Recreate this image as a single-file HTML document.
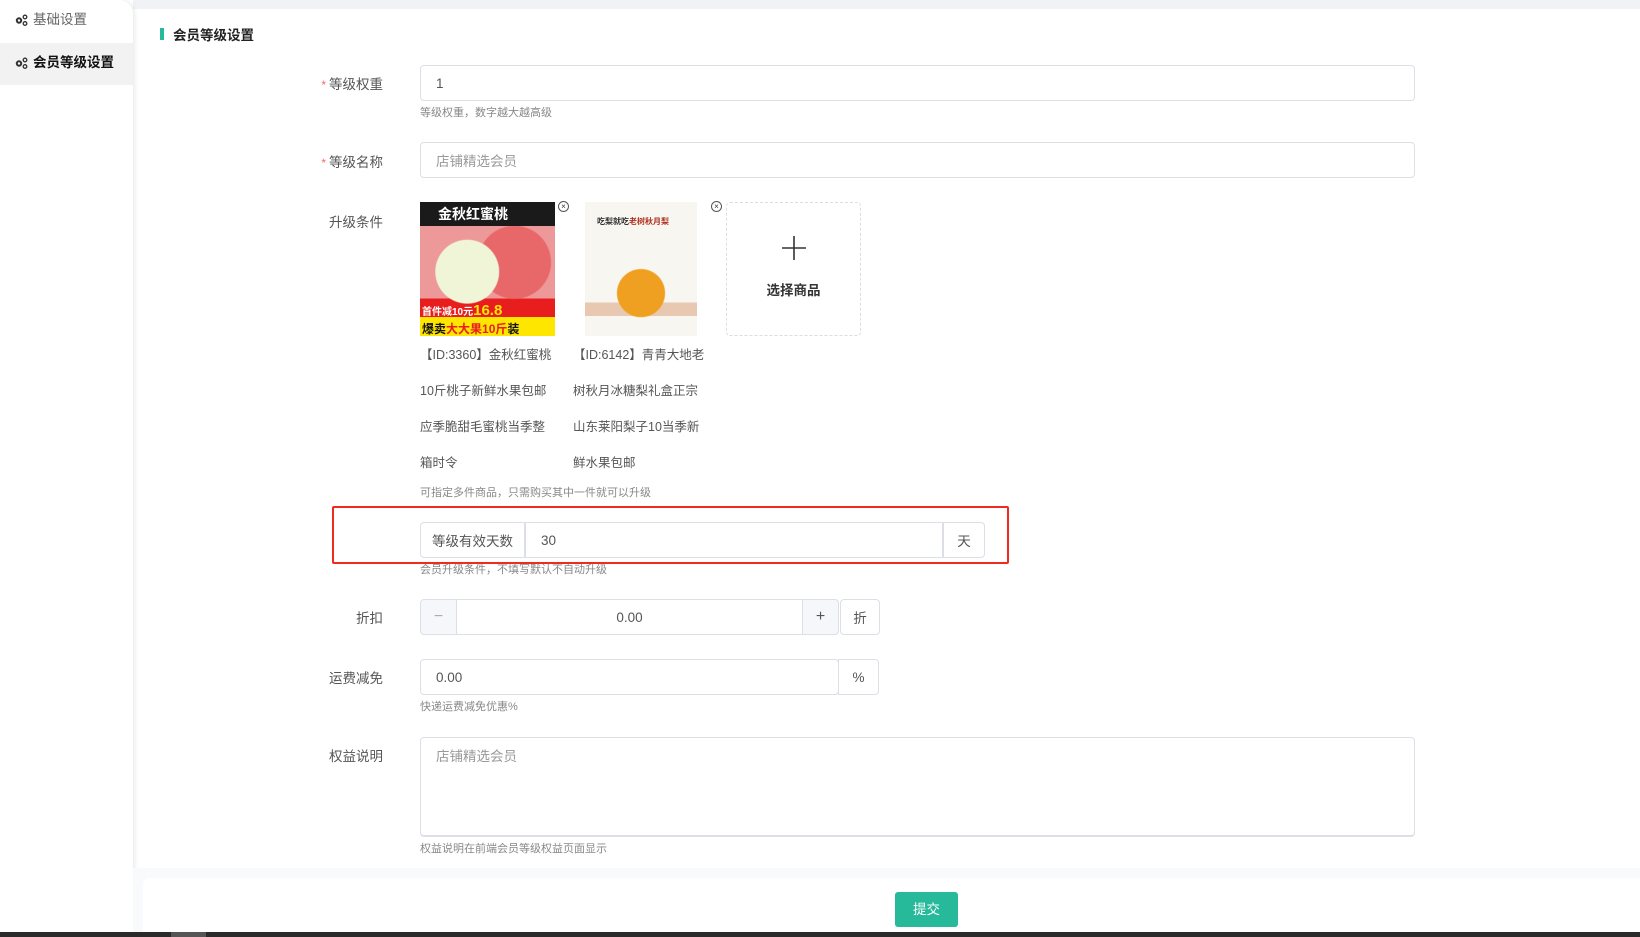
<!DOCTYPE html>
<html><head><meta charset="utf-8">
<style>
*{box-sizing:border-box;margin:0;padding:0}
body{width:1640px;height:937px;overflow:hidden;background:#fff;font-family:"Liberation Sans","Noto Sans CJK SC",sans-serif;color:#333;font-size:14px;position:relative}
.a{position:absolute}
.side{left:0;top:0;width:133px;height:937px;background:#fff;box-shadow:2px 0 4px rgba(0,0,0,.08);border-top-right-radius:14px}
.mi{left:0;width:133px;height:42px;line-height:40px;padding-left:14px;font-size:13.5px}
.mi svg{vertical-align:-2px;margin-right:5px}
.topbar{left:133px;top:0;width:1507px;height:9px;background:#f0f2f5}
.lbl{width:120px;text-align:right;left:263px;font-size:13.5px;color:#555}
.lbl b{color:#f56c6c;font-weight:normal;font-size:12px;margin-right:3px}
.inp{border:1px solid #dcdfe6;border-radius:4px;background:#fff;font-size:13.5px;color:#555;padding-left:15px;display:flex;align-items:center}
.hint{font-size:11px;color:#888;left:420px}
.cap{font-size:12.5px;color:#555;line-height:36px}
.add{border:1px solid #dcdfe6;background:#fff;display:flex;align-items:center;justify-content:center;color:#555;font-size:13.5px}
</style></head><body>
<div class="a topbar"></div>
<div class="a side">
 <div class="a mi" style="top:0;color:#666"><svg width="14" height="12" viewBox="0 0 14 12"><circle cx="5" cy="6.5" r="3.2" fill="#333"/><circle cx="5" cy="6.5" r="1.2" fill="#fff"/><circle cx="11" cy="3" r="1.8" fill="none" stroke="#333" stroke-width="1.3"/><circle cx="11" cy="9.5" r="1.8" fill="none" stroke="#333" stroke-width="1.3"/></svg>基础设置</div>
 <div class="a mi" style="top:43px;background:#f2f2f2;color:#111;font-weight:bold"><svg width="14" height="12" viewBox="0 0 14 12"><circle cx="5" cy="6.5" r="3.2" fill="#333"/><circle cx="5" cy="6.5" r="1.2" fill="#fff"/><circle cx="11" cy="3" r="1.8" fill="none" stroke="#333" stroke-width="1.3"/><circle cx="11" cy="9.5" r="1.8" fill="none" stroke="#333" stroke-width="1.3"/></svg>会员等级设置</div>
</div>
<div class="a" style="left:160px;top:28px;width:4px;height:12px;background:#26b99a"></div>
<div class="a" style="left:173px;top:24px;font-size:13.5px;font-weight:bold;color:#222">会员等级设置</div>

<div class="a lbl" style="top:73px"><b>*</b>等级权重</div>
<div class="a inp" style="left:420px;top:65px;width:995px;height:36px">1</div>
<div class="a hint" style="top:104px">等级权重，数字越大越高级</div>

<div class="a lbl" style="top:151px"><b>*</b>等级名称</div>
<div class="a inp" style="left:420px;top:142px;width:995px;height:36px;color:#999">店铺精选会员</div>

<div class="a lbl" style="top:211px">升级条件</div>
<div class="a" style="left:420px;top:202px;width:135px;height:134px;background:linear-gradient(180deg,#1a1a1a 0 18%,transparent 18%),radial-gradient(circle at 35% 52%,#f0f5d8 0 28%,transparent 29%),radial-gradient(circle at 70% 45%,#e8686a 0 30%,transparent 31%),linear-gradient(180deg,#e99 0 72%,#e81e1e 72% 86%,#ffe600 86%);overflow:hidden">
 <div class="a" style="left:18px;top:2px;color:#fff;font-weight:bold;font-size:14px">金秋红蜜桃</div>
 <div class="a" style="left:2px;top:100px;color:#fff;font-size:10px;font-weight:bold">首件减10元<span style="color:#ffe600;font-size:15px">16.8</span></div>
 <div class="a" style="left:2px;top:118px;color:#111;font-size:12px;font-weight:bold">爆卖<span style="color:#e81e1e">大大果10斤</span>装</div>
</div>
<div class="a" style="left:558px;top:201px;width:11px;height:11px;border:1px solid #555;border-radius:50%;font-size:8px;line-height:9px;text-align:center;color:#333">×</div>
<div class="a" style="left:585px;top:202px;width:112px;height:134px;background:radial-gradient(circle at 50% 68%,#f0a020 0 22%,transparent 23%),linear-gradient(180deg,#f8f6f0 0 75%,#e8c8b0 75% 85%,#f8f6f0 85%)">
 <div class="a" style="left:12px;top:14px;font-size:8px;color:#333;font-weight:bold">吃梨就吃<span style="color:#b03020">老树秋月梨</span></div>
</div>
<div class="a" style="left:711px;top:201px;width:11px;height:11px;border:1px solid #555;border-radius:50%;font-size:8px;line-height:9px;text-align:center;color:#333">×</div>
<div class="a" style="left:726px;top:202px;width:135px;height:134px;border:1px dashed #d9dde6;border-radius:4px;text-align:center">
 <svg class="a" style="left:54px;top:32px" width="26" height="26" viewBox="0 0 26 26"><path d="M13 1V25M1 13H25" stroke="#333" stroke-width="1.6"/></svg>
 <div class="a" style="left:0;width:133px;top:76px;font-size:13.5px;font-weight:bold;color:#333">选择商品</div>
</div>
<div class="a cap" style="left:420px;top:337px;width:150px">【ID:3360】金秋红蜜桃<br>10斤桃子新鲜水果包邮<br>应季脆甜毛蜜桃当季整<br>箱时令</div>
<div class="a cap" style="left:573px;top:337px;width:150px">【ID:6142】青青大地老<br>树秋月冰糖梨礼盒正宗<br>山东莱阳梨子10当季新<br>鲜水果包邮</div>
<div class="a hint" style="top:484px">可指定多件商品，只需购买其中一件就可以升级</div>

<div class="a" style="left:332px;top:506px;width:677px;height:58px;border:2px solid #f02a1e;border-radius:2px"></div>
<div class="a add" style="left:420px;top:522px;width:105px;height:36px;border-radius:4px 0 0 4px">等级有效天数</div>
<div class="a inp" style="left:525px;top:522px;width:418px;height:36px;border-radius:0">30</div>
<div class="a add" style="left:943px;top:522px;width:42px;height:36px;border-radius:0 4px 4px 0">天</div>
<div class="a hint" style="top:561px">会员升级条件，不填写默认不自动升级</div>

<div class="a lbl" style="top:607px">折扣</div>
<div class="a add" style="left:420px;top:599px;width:37px;height:36px;background:#f5f7fa;border-radius:4px 0 0 4px;color:#aaa;font-size:16px">−</div>
<div class="a inp" style="left:456px;top:599px;width:347px;height:36px;border-radius:0;justify-content:center;padding:0">0.00</div>
<div class="a add" style="left:802px;top:599px;width:37px;height:36px;background:#f5f7fa;border-radius:0 4px 4px 0;font-size:16px">+</div>
<div class="a add" style="left:840px;top:599px;width:40px;height:36px;border-radius:4px">折</div>

<div class="a lbl" style="top:667px">运费减免</div>
<div class="a inp" style="left:420px;top:659px;width:419px;height:36px">0.00</div>
<div class="a add" style="left:838px;top:659px;width:41px;height:36px;border-radius:0 4px 4px 0">%</div>
<div class="a hint" style="top:698px">快递运费减免优惠%</div>

<div class="a lbl" style="top:745px">权益说明</div>
<div class="a inp" style="left:420px;top:737px;width:995px;height:100px;align-items:flex-start;padding-top:7px;color:#999;border-bottom:2px solid #dcdfe6">店铺精选会员</div>
<div class="a hint" style="top:840px">权益说明在前端会员等级权益页面显示</div>

<div class="a" style="left:133px;top:868px;width:1507px;height:69px;background:#f9fafb"></div>
<div class="a" style="left:143px;top:878px;width:1497px;height:59px;background:#fff;border-radius:6px 0 0 0"></div>
<div class="a" style="left:895px;top:892px;width:63px;height:35px;background:#26b99a;border-radius:3px;color:#fff;font-size:13.5px;text-align:center;line-height:35px">提交</div>
<div class="a" style="left:0;top:932px;width:1640px;height:5px;background:#2a2a2a"></div>
<div class="a" style="left:171px;top:932px;width:35px;height:5px;background:#555"></div>
</body></html>
